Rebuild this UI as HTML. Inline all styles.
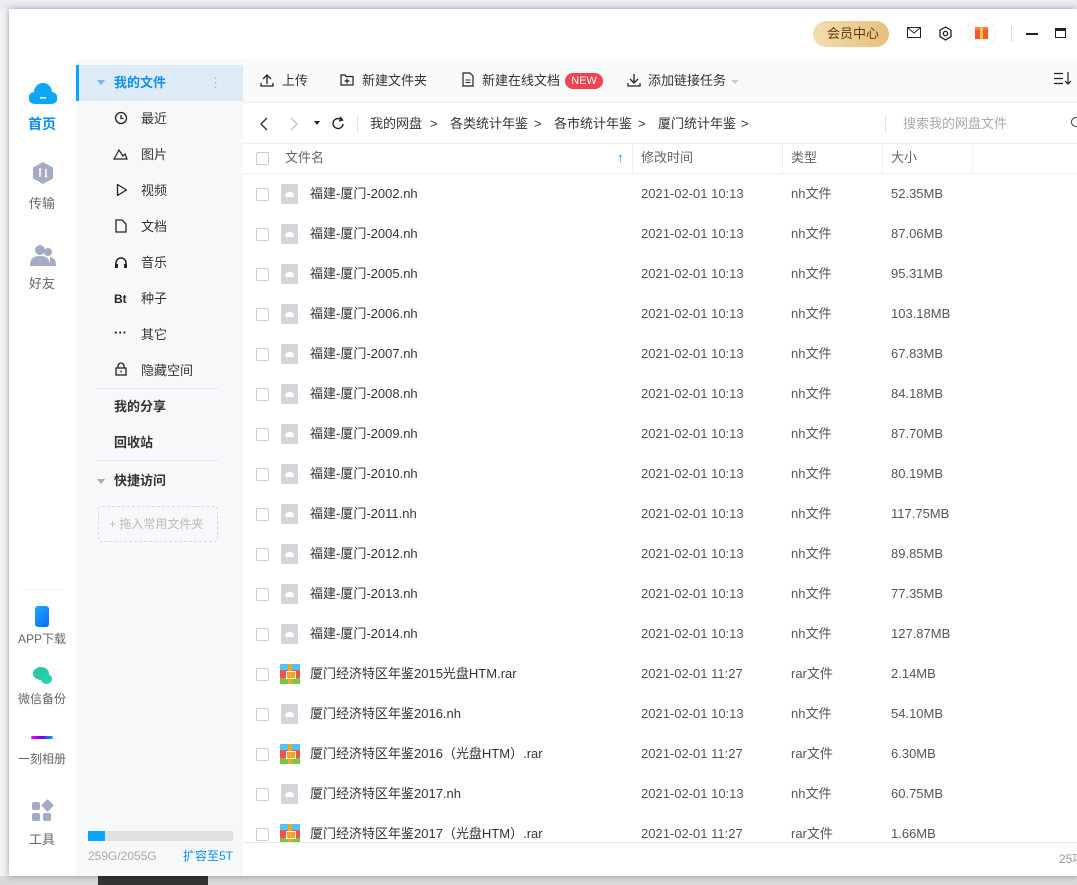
<!DOCTYPE html>
<html><head><meta charset="utf-8">
<style>
*{margin:0;padding:0;box-sizing:border-box}
body{width:1077px;height:885px;position:relative;overflow:hidden;background:#d8d8d8;font-family:"Liberation Sans","Noto Sans CJK SC",sans-serif;font-size:13px;color:#333}
.a{position:absolute}
.win{left:9px;top:9px;width:1068px;height:867px;background:#fff;box-shadow:0 0 6px rgba(0,0,0,.35)}
.t{position:absolute;white-space:nowrap;line-height:16px}
.side{left:76px;top:59px;width:167px;height:817px;background:#f7f8fa}
.row .cb{position:absolute;left:256px;width:13px;height:13px;border:1px solid #ccc;border-radius:2px;background:#fff}
.doc{position:absolute;left:281px;width:17px;height:20px;background:#d4d5da;border-radius:2px}
.doc:after{content:"";position:absolute;left:4px;top:8px;width:9px;height:5px;background:#fff;border-radius:4px 4px 1px 1px}
.rar{position:absolute;left:280px;width:20px;height:20px;background:linear-gradient(#4fc3f7 0 30%,#ef5350 30% 70%,#7cc444 70%)}
.rar:before{content:"";position:absolute;left:8px;top:0;width:4px;height:20px;background:#f5a623}
.rar:after{content:"";position:absolute;left:6px;top:7px;width:8px;height:6px;border:1px solid #fff;background:#f5a623}
.nm{left:310px}.dt{left:641px;color:#555}.ty{left:791px;color:#555}.sz{left:891px;color:#555}
.nav{color:#666;font-size:13px;text-align:center;width:66px;left:9px}
</style></head><body>
<div class="a" style="left:0;top:0;width:1077px;height:9px;background:#e9edf2"></div>
<div class="a" style="left:0;top:9px;width:9px;height:867px;background:#f2f2f2"></div>
<div class="a" style="left:98px;top:876px;width:110px;height:9px;background:#333"></div>
<div class="a win"></div>
<!-- top bar -->
<div class="a" style="left:813px;top:21px;width:76px;height:26px;border-radius:13px;background:linear-gradient(90deg,#f5dcaf,#e8bf7a)"></div>
<div class="t" style="left:827px;top:26px;color:#5a3a10;font-size:13px">会员中心</div>
<svg class="a" style="left:907px;top:27px" width="15" height="12"><rect x=".5" y=".5" width="13" height="10" fill="none" stroke="#222"/><path d="M1 1l6 5 6-5" fill="none" stroke="#222"/></svg>
<svg class="a" style="left:938px;top:26px" width="15" height="15"><path d="M7.5 1l5.5 3.2v6.4L7.5 14 2 10.6V4.2z" fill="none" stroke="#222" stroke-width="1.3"/><circle cx="7.5" cy="7.5" r="2.2" fill="none" stroke="#222" stroke-width="1.3"/></svg>
<div class="a" style="left:967px;top:19px;width:28px;height:28px;border-radius:50%;background:#fff;box-shadow:0 0 2px #ddd"></div>
<div class="a" style="left:975px;top:27px;width:13px;height:12px;background:#f5582b;border-top:3px solid #ff7a3c"></div>
<div class="a" style="left:980px;top:27px;width:3px;height:12px;background:#ffc145"></div>
<div class="a" style="left:1011px;top:26px;width:1px;height:16px;background:#ddd"></div>
<div class="a" style="left:1026px;top:33px;width:12px;height:1.5px;background:#222"></div>
<div class="a" style="left:1055px;top:28px;width:11px;height:10px;border:1.5px solid #222;border-top-width:3px"></div>
<!-- left nav -->
<div class="a" style="left:9px;top:59px;width:67px;height:817px;background:#fff"></div>
<svg class="a" style="left:29px;top:80px" width="28" height="26"><path d="M6 24a6 6 0 0 1-1-12 9 9 0 0 1 18 0 6 6 0 0 1-1 12z" fill="#0fa7f5"/><rect x="11" y="17" width="6" height="1.6" fill="#fff"/></svg>
<div class="t nav" style="top:116px;color:#0d8ef5;font-weight:bold;font-size:14px">首页</div>
<svg class="a" style="left:31px;top:161px" width="24" height="24"><path d="M12 1l10 5.5v11L12 23 2 17.5v-11z" fill="#a3acc4"/><path d="M9 8v8M15 8v8M8 9l1-1 1 1M14 15l1 1 1-1" stroke="#fff" stroke-width="1.5" fill="none"/></svg>
<div class="t nav" style="top:196px">传输</div>
<svg class="a" style="left:30px;top:244px" width="26" height="22"><circle cx="10" cy="6" r="5" fill="#a3acc4"/><path d="M0 22c0-8 4-10 10-10s10 2 10 10z" fill="#a3acc4"/><circle cx="18" cy="8" r="4" fill="#a3acc4"/><path d="M20 22h6c0-6-2-8-6-9z" fill="#a3acc4"/></svg>
<div class="t nav" style="top:276px">好友</div>
<div class="a" style="left:22px;top:589px;width:40px;height:1px;background:#eee"></div>
<div class="a" style="left:35px;top:606px;width:14px;height:21px;border-radius:3px;background:linear-gradient(135deg,#1ea6ff,#0a6cf0)"></div>
<div class="t nav" style="top:631px;font-size:12px">APP下载</div>
<div class="a" style="left:33px;top:667px;width:16px;height:13px;border-radius:50%;background:#2bc8a0"></div>
<div class="a" style="left:41px;top:674px;width:11px;height:10px;border-radius:50%;background:#1fd3b0"></div>
<div class="t nav" style="top:691px;font-size:12px">微信备份</div>
<div class="a" style="left:31px;top:736px;width:22px;height:3px;border-radius:2px;background:linear-gradient(90deg,#f0f,#60f,#0af)"></div>
<div class="t nav" style="top:751px;font-size:12px">一刻相册</div>
<div class="a" style="left:32px;top:802px;width:8px;height:8px;border-radius:2px;background:#a3acc4"></div>
<div class="a" style="left:43px;top:801px;width:9px;height:9px;background:#a3acc4;transform:rotate(45deg)"></div>
<div class="a" style="left:32px;top:813px;width:8px;height:8px;border-radius:2px;background:#a3acc4"></div>
<div class="a" style="left:43px;top:813px;width:8px;height:8px;border-radius:2px;background:#a3acc4"></div>
<div class="t nav" style="top:832px">工具</div>
<!-- sidebar -->
<div class="a side"></div>
<div class="a" style="left:76px;top:65px;width:167px;height:36px;background:#dcebf6;border-left:3px solid #06a7ff"></div>
<div class="a" style="left:97px;top:80px;border:4px solid transparent;border-top:5px solid #70b8ef"></div>
<div class="t" style="left:114px;top:75px;color:#0d8ef5;font-weight:bold">我的文件</div>
<div class="t" style="left:209px;top:75px;color:#8fc3ee">⋮</div>
<svg class="a" style="left:114px;top:111px" width="14" height="14"><circle cx="7" cy="7" r="5.5" fill="none" stroke="#222" stroke-width="1.3"/><path d="M7 4v3.5h2.5" fill="none" stroke="#222" stroke-width="1.3"/></svg>
<div class="t" style="left:141px;top:111px">最近</div>
<svg class="a" style="left:113px;top:148px" width="15" height="12"><path d="M1 11l5-9 4 6 2-2 2 5z" fill="none" stroke="#222" stroke-width="1.2"/></svg>
<div class="t" style="left:141px;top:147px">图片</div>
<svg class="a" style="left:116px;top:183px" width="12" height="14"><path d="M1.5 1.5v11l9-5.5z" fill="none" stroke="#222" stroke-width="1.3" stroke-linejoin="round"/></svg>
<div class="t" style="left:141px;top:183px">视频</div>
<svg class="a" style="left:115px;top:219px" width="12" height="14"><path d="M1 1h6l4 4v8H1z" fill="none" stroke="#222" stroke-width="1.3"/></svg>
<div class="t" style="left:141px;top:219px">文档</div>
<svg class="a" style="left:114px;top:256px" width="14" height="13"><path d="M2 11V7a5 5 0 0 1 10 0v4" fill="none" stroke="#222" stroke-width="1.5"/><rect x="1" y="8" width="3" height="4" fill="#222"/><rect x="10" y="8" width="3" height="4" fill="#222"/></svg>
<div class="t" style="left:141px;top:255px">音乐</div>
<div class="t" style="left:114px;top:291px;font-weight:bold;color:#222;font-size:12px">Bt</div>
<div class="t" style="left:141px;top:291px">种子</div>
<div class="t" style="left:114px;top:325px;font-weight:bold;color:#222">···</div>
<div class="t" style="left:141px;top:327px">其它</div>
<svg class="a" style="left:115px;top:362px" width="12" height="14"><path d="M3 6V4a3 3 0 0 1 6 0v2" fill="none" stroke="#222" stroke-width="1.3"/><rect x="1" y="6" width="10" height="7" fill="none" stroke="#222" stroke-width="1.3"/><rect x="5.5" y="8.5" width="1.2" height="2" fill="#222"/></svg>
<div class="t" style="left:141px;top:363px">隐藏空间</div>
<div class="a" style="left:98px;top:388px;width:120px;height:1px;background:#e6e8eb"></div>
<div class="t" style="left:114px;top:399px;font-weight:bold">我的分享</div>
<div class="t" style="left:114px;top:435px;font-weight:bold">回收站</div>
<div class="a" style="left:98px;top:460px;width:120px;height:1px;background:#e6e8eb"></div>
<div class="a" style="left:97px;top:479px;border:4px solid transparent;border-top:5px solid #aaa"></div>
<div class="t" style="left:114px;top:473px;font-weight:bold">快捷访问</div>
<div class="a" style="left:98px;top:506px;width:120px;height:36px;border:1px dashed #d8dbe0;border-radius:4px"></div>
<div class="t" style="left:109px;top:516px;color:#bbb;font-size:12px">+ 拖入常用文件夹</div>
<div class="a" style="left:88px;top:831px;width:145px;height:10px;background:#e0e0e0"></div>
<div class="a" style="left:88px;top:831px;width:17px;height:10px;background:#06a7ff"></div>
<div class="t" style="left:88px;top:848px;color:#aaa;font-size:12px">259G/2055G</div>
<div class="t" style="left:183px;top:848px;color:#0d8ef5;font-size:12px">扩容至5T</div>
<!-- main toolbar -->
<div class="a" style="left:243px;top:59px;width:834px;height:44px;background:#f9fafb;border-bottom:1px solid #eee"></div>
<svg class="a" style="left:260px;top:73px" width="14" height="14"><path d="M7 11V2M3 6l4-4 4 4M1 10v3h12v-3" fill="none" stroke="#222" stroke-width="1.3"/></svg>
<div class="t" style="left:282px;top:73px">上传</div>
<svg class="a" style="left:340px;top:73px" width="14" height="13"><path d="M1 2h4l1 1.5h7V12H1z" fill="none" stroke="#222" stroke-width="1.2"/><path d="M7 5.5v5M4.5 8h5" stroke="#222" stroke-width="1.2"/></svg>
<div class="t" style="left:362px;top:73px">新建文件夹</div>
<svg class="a" style="left:462px;top:72px" width="12" height="15"><path d="M1 1h7l3 3v10H1z" fill="none" stroke="#222" stroke-width="1.2"/><path d="M3.5 8h5M3.5 10.5h5" stroke="#222"/></svg>
<div class="t" style="left:482px;top:73px">新建在线文档</div>
<div class="a" style="left:565px;top:73px;width:38px;height:16px;border-radius:8px;background:#f0424f;color:#fff;font-size:11px;text-align:center;line-height:16px">NEW</div>
<svg class="a" style="left:627px;top:73px" width="14" height="14"><path d="M7 1v9M3 6l4 4 4-4M1 10v3h12v-3" fill="none" stroke="#222" stroke-width="1.3"/></svg>
<div class="t" style="left:648px;top:73px">添加链接任务</div>
<div class="a" style="left:731px;top:80px;border:4px solid transparent;border-top:4px solid #ccc"></div>
<svg class="a" style="left:1054px;top:72px" width="18" height="14"><path d="M0 1.5h9M0 6.5h9M0 11.5h9M14 0v12M11 9l3 3 3-3" fill="none" stroke="#222" stroke-width="1.2"/></svg>
<!-- breadcrumb -->
<svg class="a" style="left:259px;top:116px" width="10" height="16"><path d="M8 2L2 8l6 6" fill="none" stroke="#333" stroke-width="1.4"/></svg>
<svg class="a" style="left:289px;top:116px" width="10" height="16"><path d="M2 2l6 6-6 6" fill="none" stroke="#bbb" stroke-width="1.2"/></svg>
<div class="a" style="left:314px;top:121px;border:3.5px solid transparent;border-top:4px solid #222"></div>
<svg class="a" style="left:331px;top:116px" width="14" height="15"><path d="M12 8a5 5 0 1 1-2-4.5" fill="none" stroke="#222" stroke-width="1.4"/><path d="M9 1l2.5 3L8 5" fill="none" stroke="#222" stroke-width="1.4"/></svg>
<div class="a" style="left:357px;top:114px;width:1px;height:19px;background:#e5e5e5"></div>
<div class="t" style="left:370px;top:116px">我的网盘</div>
<div class="t" style="left:430px;top:116px">&gt;</div>
<div class="t" style="left:450px;top:116px">各类统计年鉴</div>
<div class="t" style="left:534px;top:116px">&gt;</div>
<div class="t" style="left:554px;top:116px">各市统计年鉴</div>
<div class="t" style="left:638px;top:116px">&gt;</div>
<div class="t" style="left:658px;top:116px">厦门统计年鉴</div>
<div class="t" style="left:741px;top:116px">&gt;</div>
<div class="a" style="left:885px;top:114px;width:1px;height:19px;background:#e5e5e5"></div>
<div class="t" style="left:903px;top:116px;color:#aaa">搜索我的网盘文件</div>
<div class="a" style="left:1071px;top:117px;width:10px;height:10px;border:1.3px solid #333;border-radius:50%"></div>
<!-- header -->
<div class="a" style="left:243px;top:143px;width:834px;height:1px;background:#eee"></div>
<div class="a" style="left:243px;top:173px;width:834px;height:1px;background:#eee"></div>
<div class="a" style="left:256px;top:152px;width:13px;height:13px;border:1px solid #ccc;border-radius:2px"></div>
<div class="t" style="left:285px;top:150px;color:#666">文件名</div>
<div class="t" style="left:617px;top:150px;color:#0d8ef5;font-weight:bold">↑</div>
<div class="a" style="left:632px;top:144px;width:1px;height:29px;background:#eee"></div>
<div class="t" style="left:641px;top:150px;color:#666">修改时间</div>
<div class="a" style="left:782px;top:144px;width:1px;height:29px;background:#eee"></div>
<div class="t" style="left:791px;top:150px;color:#666">类型</div>
<div class="a" style="left:882px;top:144px;width:1px;height:29px;background:#eee"></div>
<div class="t" style="left:891px;top:150px;color:#666">大小</div>
<div class="a" style="left:972px;top:144px;width:1px;height:29px;background:#eee"></div>
<!-- rows -->
<div class="a" style="left:243px;top:174px;width:834px;height:668px;overflow:hidden">
<div class="a" style="left:-243px;top:-174px;width:1077px;height:900px">
<div class="row">
<span class="cb" style="top:188px"></span><span class="doc" style="top:184px"></span><span class="t nm" style="top:186px">福建-厦门-2002.nh</span><span class="t dt" style="top:186px">2021-02-01 10:13</span><span class="t ty" style="top:186px">nh文件</span><span class="t sz" style="top:186px">52.35MB</span>
<span class="cb" style="top:228px"></span><span class="doc" style="top:224px"></span><span class="t nm" style="top:226px">福建-厦门-2004.nh</span><span class="t dt" style="top:226px">2021-02-01 10:13</span><span class="t ty" style="top:226px">nh文件</span><span class="t sz" style="top:226px">87.06MB</span>
<span class="cb" style="top:268px"></span><span class="doc" style="top:264px"></span><span class="t nm" style="top:266px">福建-厦门-2005.nh</span><span class="t dt" style="top:266px">2021-02-01 10:13</span><span class="t ty" style="top:266px">nh文件</span><span class="t sz" style="top:266px">95.31MB</span>
<span class="cb" style="top:308px"></span><span class="doc" style="top:304px"></span><span class="t nm" style="top:306px">福建-厦门-2006.nh</span><span class="t dt" style="top:306px">2021-02-01 10:13</span><span class="t ty" style="top:306px">nh文件</span><span class="t sz" style="top:306px">103.18MB</span>
<span class="cb" style="top:348px"></span><span class="doc" style="top:344px"></span><span class="t nm" style="top:346px">福建-厦门-2007.nh</span><span class="t dt" style="top:346px">2021-02-01 10:13</span><span class="t ty" style="top:346px">nh文件</span><span class="t sz" style="top:346px">67.83MB</span>
<span class="cb" style="top:388px"></span><span class="doc" style="top:384px"></span><span class="t nm" style="top:386px">福建-厦门-2008.nh</span><span class="t dt" style="top:386px">2021-02-01 10:13</span><span class="t ty" style="top:386px">nh文件</span><span class="t sz" style="top:386px">84.18MB</span>
<span class="cb" style="top:428px"></span><span class="doc" style="top:424px"></span><span class="t nm" style="top:426px">福建-厦门-2009.nh</span><span class="t dt" style="top:426px">2021-02-01 10:13</span><span class="t ty" style="top:426px">nh文件</span><span class="t sz" style="top:426px">87.70MB</span>
<span class="cb" style="top:468px"></span><span class="doc" style="top:464px"></span><span class="t nm" style="top:466px">福建-厦门-2010.nh</span><span class="t dt" style="top:466px">2021-02-01 10:13</span><span class="t ty" style="top:466px">nh文件</span><span class="t sz" style="top:466px">80.19MB</span>
<span class="cb" style="top:508px"></span><span class="doc" style="top:504px"></span><span class="t nm" style="top:506px">福建-厦门-2011.nh</span><span class="t dt" style="top:506px">2021-02-01 10:13</span><span class="t ty" style="top:506px">nh文件</span><span class="t sz" style="top:506px">117.75MB</span>
<span class="cb" style="top:548px"></span><span class="doc" style="top:544px"></span><span class="t nm" style="top:546px">福建-厦门-2012.nh</span><span class="t dt" style="top:546px">2021-02-01 10:13</span><span class="t ty" style="top:546px">nh文件</span><span class="t sz" style="top:546px">89.85MB</span>
<span class="cb" style="top:588px"></span><span class="doc" style="top:584px"></span><span class="t nm" style="top:586px">福建-厦门-2013.nh</span><span class="t dt" style="top:586px">2021-02-01 10:13</span><span class="t ty" style="top:586px">nh文件</span><span class="t sz" style="top:586px">77.35MB</span>
<span class="cb" style="top:628px"></span><span class="doc" style="top:624px"></span><span class="t nm" style="top:626px">福建-厦门-2014.nh</span><span class="t dt" style="top:626px">2021-02-01 10:13</span><span class="t ty" style="top:626px">nh文件</span><span class="t sz" style="top:626px">127.87MB</span>
<span class="cb" style="top:668px"></span><span class="rar" style="top:664px"></span><span class="t nm" style="top:666px">厦门经济特区年鉴2015光盘HTM.rar</span><span class="t dt" style="top:666px">2021-02-01 11:27</span><span class="t ty" style="top:666px">rar文件</span><span class="t sz" style="top:666px">2.14MB</span>
<span class="cb" style="top:708px"></span><span class="doc" style="top:704px"></span><span class="t nm" style="top:706px">厦门经济特区年鉴2016.nh</span><span class="t dt" style="top:706px">2021-02-01 10:13</span><span class="t ty" style="top:706px">nh文件</span><span class="t sz" style="top:706px">54.10MB</span>
<span class="cb" style="top:748px"></span><span class="rar" style="top:744px"></span><span class="t nm" style="top:746px">厦门经济特区年鉴2016（光盘HTM）.rar</span><span class="t dt" style="top:746px">2021-02-01 11:27</span><span class="t ty" style="top:746px">rar文件</span><span class="t sz" style="top:746px">6.30MB</span>
<span class="cb" style="top:788px"></span><span class="doc" style="top:784px"></span><span class="t nm" style="top:786px">厦门经济特区年鉴2017.nh</span><span class="t dt" style="top:786px">2021-02-01 10:13</span><span class="t ty" style="top:786px">nh文件</span><span class="t sz" style="top:786px">60.75MB</span>
<span class="cb" style="top:828px"></span><span class="rar" style="top:824px"></span><span class="t nm" style="top:826px">厦门经济特区年鉴2017（光盘HTM）.rar</span><span class="t dt" style="top:826px">2021-02-01 11:27</span><span class="t ty" style="top:826px">rar文件</span><span class="t sz" style="top:826px">1.66MB</span>
</div></div></div>
<div class="a" style="left:243px;top:842px;width:834px;height:1px;background:#e8e8e8"></div>
<div class="t" style="left:1059px;top:851px;color:#999;font-size:12px">25项</div>
</body></html>
